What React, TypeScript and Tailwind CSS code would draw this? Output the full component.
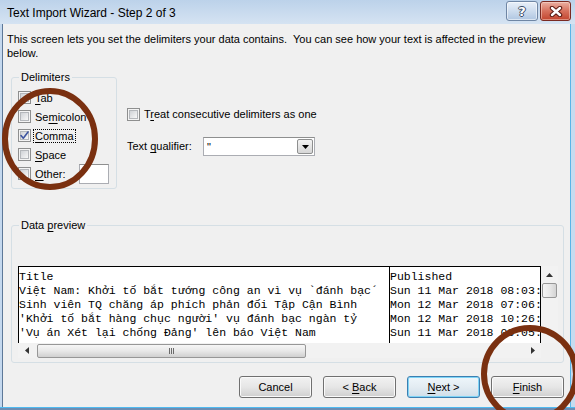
import React from "react";

const U = ({ c }: { c: string }) => <span className="underline underline-offset-[2px]">{c}</span>;

const Check = ({ checked = false }: { checked?: boolean }) => (
  <span className="relative flex h-[13px] w-[13px] shrink-0 items-center justify-center border border-[#8e8f8f] bg-[#f4f4f4]">
    <span className="h-[9px] w-[9px] border border-[#b4b7bb] bg-gradient-to-br from-[#cfd2d6] to-[#f8f8f8]" />
    {checked && (
      <svg className="absolute left-[-1px] top-[-1px]" width="13" height="13" viewBox="0 0 13 13">
        <path d="M3 6.5 L5.3 9.2 L10 3" fill="none" stroke="#3d54a0" strokeWidth="1.6" strokeLinecap="round" strokeLinejoin="round" />
      </svg>
    )}
  </span>
);

const DelimRow = ({ label, focus = false, checked = false, children }: { label: React.ReactNode; focus?: boolean; checked?: boolean; children?: React.ReactNode }) => (
  <div className="flex h-[19px] items-center">
    <Check checked={checked} />
    <span className={`ml-[2px] border px-[1px] leading-[12px] ${focus ? "border-dotted border-black" : "border-transparent"}`}>{label}</span>
    {children}
  </div>
);

const Btn = ({ children, def = false }: { children: React.ReactNode; def?: boolean }) => (
  <div
    className={`flex h-[22px] w-[73px] items-center justify-center whitespace-pre rounded-[3px] border ${
      def
        ? "border-[#3c7fb1] bg-gradient-to-b from-[#eef6fb] via-[#e3ecf2] to-[#cfdee9] shadow-[inset_0_0_0_1px_#7fd4f6]"
        : "border-[#707070] bg-gradient-to-b from-[#f2f2f2] via-[#e6e6e6] to-[#cfcfcf] shadow-[inset_0_0_0_1px_#fafafa]"
    }`}
  >
    {children}
  </div>
);

const rows1 = [
  "Title",
  "Việt Nam: Khởi tố bắt tướng công an vì vụ `đánh bạc´",
  "Sinh viên TQ chăng áp phích phản đối Tập Cận Bình",
  "'Khởi tố bắt hàng chục người' vụ đánh bạc ngàn tỷ",
  "'Vụ án Xét lại chống Đảng' lên báo Việt Nam",
];
const rows2 = [
  "Published",
  "Sun 11 Mar 2018 08:03:",
  "Mon 12 Mar 2018 07:06:",
  "Mon 12 Mar 2018 10:26:",
  "Sun 11 Mar 2018 03:05:",
];

export default function App() {
  return (
    <div className="relative flex h-[410px] w-[575px] flex-col overflow-hidden bg-[#c4d8ee] font-['Liberation_Sans',Arial,sans-serif] text-[11px] text-black">
      {/* title bar */}
      <div className="flex h-[24px] shrink-0 items-start justify-between bg-gradient-to-b from-[#bcd2ea] to-[#d5e3f2] pl-[7px] pr-[4px]">
        <span className="mt-[5px] text-[12px] leading-[16px]">Text Import Wizard - Step 2 of 3</span>
        <div className="mt-[1px] flex gap-[2px]">
          <div className="flex h-[20px] w-[32px] items-center justify-center rounded-[3px] border border-[#6f86a4] bg-gradient-to-b from-[#e9f0f9] via-[#cddcee] to-[#afc6e1] shadow-[inset_0_0_0_1px_rgba(255,255,255,0.55)]">
            <span className="font-['DejaVu_Sans',sans-serif] text-[13px] font-bold leading-none text-white [text-shadow:1px_0_0_#3b4d66,-1px_0_0_#3b4d66,0_1px_0_#3b4d66,0_-1px_0_#3b4d66]">?</span>
          </div>
          <div className="flex h-[20px] w-[31px] items-center justify-center rounded-[3px] border border-[#7a2a22] bg-gradient-to-b from-[#eab0a3] via-[#d6705c] to-[#c2442d] shadow-[inset_0_0_0_1px_rgba(255,230,220,0.45)]">
            <svg width="14" height="11" viewBox="0 0 14 11">
              <path d="M3 2 L11 9 M11 2 L3 9" stroke="#5a1a12" strokeWidth="4.4" strokeLinecap="round" />
              <path d="M3 2 L11 9 M11 2 L3 9" stroke="#ffffff" strokeWidth="2.4" strokeLinecap="round" />
            </svg>
          </div>
        </div>
      </div>

      <div className="flex flex-1">
        <div className="w-[3px] shrink-0 border-r border-[#5d7898] bg-[#c4d8ee]" />
        {/* content */}
        <div className="flex flex-1 flex-col bg-[#f0f0f0] pl-[8px] pr-[6px]">
          <p className="ml-[-4px] mt-[8px] leading-[14px]">
            This screen lets you set the delimiters your data contains.&nbsp; You can see how your text is affected in the preview
            <br />
            below.
          </p>

          <div className="mt-[10px] flex">
            <fieldset className="w-[106px] rounded-[3px] border border-[#d5dfe5] pb-[5px] pl-[6px]">
              <legend className="ml-[1px] px-[2px] leading-[14px]">Delimiters</legend>
              <div className="pt-[4px]">
                <DelimRow label={<><U c="T" />ab</>} />
                <DelimRow label={<>Se<U c="m" />icolon</>} />
                <DelimRow label={<><U c="C" />omma</>} focus checked />
                <DelimRow label={<><U c="S" />pace</>} />
                <DelimRow label={<><U c="O" />ther:</>}>
                  <div className="ml-[11px] h-[20px] w-[30px] border border-[#abadb3] border-t-[#8e8f8f] bg-white" />
                </DelimRow>
              </div>
            </fieldset>

            <div className="ml-[10px] flex flex-col">
              <div className="mt-[36px] flex h-[16px] items-center">
                <Check />
                <span className="ml-[4px]">
                  T<U c="r" />eat consecutive delimiters as one
                </span>
              </div>
              <div className="mt-[15px] flex h-[19px] items-center">
                <span className="w-[76px]">
                  Text <U c="q" />ualifier:
                </span>
                <div className="flex h-[19px] w-[112px] items-center border border-[#abadb3] border-t-[#8e8f8f] bg-white">
                  <span className="ml-[3px] flex-1 leading-[12px]">"</span>
                  <div className="mr-[1px] flex h-[15px] w-[16px] items-center justify-center rounded-[2px] border border-[#8e8f8f] bg-gradient-to-b from-[#f4f4f4] to-[#d6d6d6]">
                    <svg width="7" height="4" viewBox="0 0 7 4">
                      <path d="M0 0 H7 L3.5 4 Z" fill="#000" />
                    </svg>
                  </div>
                </div>
              </div>
            </div>
          </div>

          <fieldset className="mt-[29px] w-[553px] rounded-[3px] border border-[#d5dfe5] pb-[4px] pl-[6px]">
            <legend className="ml-[1px] px-[2px] leading-[14px]">
              Data <U c="p" />review
            </legend>
            <div className="mt-[34px] flex w-[540px] flex-col">
              <div className="flex h-[77px]">
                <div className="flex w-[523px] overflow-hidden border-x border-t border-black bg-white font-['Liberation_Mono','DejaVu_Sans_Mono',monospace] text-[11.5px] leading-[14px]">
                  <div className="w-[371px] shrink-0 self-stretch border-r border-black pt-[3px]">
                    {rows1.map((r, i) => (
                      <div key={i} className="whitespace-pre">{r}</div>
                    ))}
                  </div>
                  <div className="min-w-0 flex-1 overflow-hidden pt-[3px]">
                    {rows2.map((r, i) => (
                      <div key={i} className="whitespace-pre">{r}</div>
                    ))}
                  </div>
                </div>
                <div className="flex w-[17px] flex-col items-center bg-[#f2f2f2]">
                  <div className="flex h-[17px] items-center justify-center">
                    <svg width="7" height="4" viewBox="0 0 7 4">
                      <path d="M3.5 0 L7 4 H0 Z" fill="#333" />
                    </svg>
                  </div>
                  <div className="h-[15px] w-[15px] rounded-[2px] border border-[#979797] bg-gradient-to-r from-[#f5f5f5] via-[#e9e9e9] to-[#d4d4d4]" />
                </div>
              </div>
              <div className="flex h-[15px]">
                <div className="flex w-[523px] items-center bg-[#f2f2f2]">
                  <div className="flex h-[15px] w-[17px] items-center justify-center">
                    <svg width="4" height="7" viewBox="0 0 4 7">
                      <path d="M0 3.5 L4 0 V7 Z" fill="#333" />
                    </svg>
                  </div>
                  <div className="ml-[2px] flex h-[14px] w-[269px] items-center justify-center gap-[1px] rounded-[2px] border border-[#979797] bg-gradient-to-b from-[#f6f6f6] via-[#e8e8e8] to-[#d0d0d0]">
                    <span className="h-[6px] w-[1px] bg-[#6b6b6b]" />
                    <span className="h-[6px] w-[1px] bg-[#6b6b6b]" />
                    <span className="h-[6px] w-[1px] bg-[#6b6b6b]" />
                  </div>
                  <div className="flex-1" />
                  <div className="flex h-[15px] w-[17px] items-center justify-center">
                    <svg width="4" height="7" viewBox="0 0 4 7">
                      <path d="M4 3.5 L0 0 V7 Z" fill="#333" />
                    </svg>
                  </div>
                </div>
                <div className="w-[17px] bg-[#f0f0f0]" />
              </div>
            </div>
          </fieldset>

          <div className="mt-[13px] flex justify-end gap-[11px]">
            <Btn>Cancel</Btn>
            <Btn>
              {"< "}
              <U c="B" />
              {"ack"}
            </Btn>
            <Btn def>
              <U c="N" />
              {"ext >"}
            </Btn>
            <Btn>
              <U c="F" />
              {"inish"}
            </Btn>
          </div>
        </div>
        <div className="w-[5px] shrink-0 border-l border-[#5ab4e6] bg-[#c6dbef]" />
      </div>
      <div className="h-[3px] shrink-0 border-t border-[#4fbaf0] bg-[#6d8db3]" />

      <svg className="pointer-events-none absolute left-0 top-0" width="575" height="410" viewBox="0 0 575 410">
        <ellipse cx="50" cy="139" rx="45" ry="48" fill="none" stroke="#7a3010" strokeWidth="6" />
        <ellipse cx="530" cy="374" rx="46" ry="46" fill="none" stroke="#7a3010" strokeWidth="6" />
      </svg>
    </div>
  );
}
